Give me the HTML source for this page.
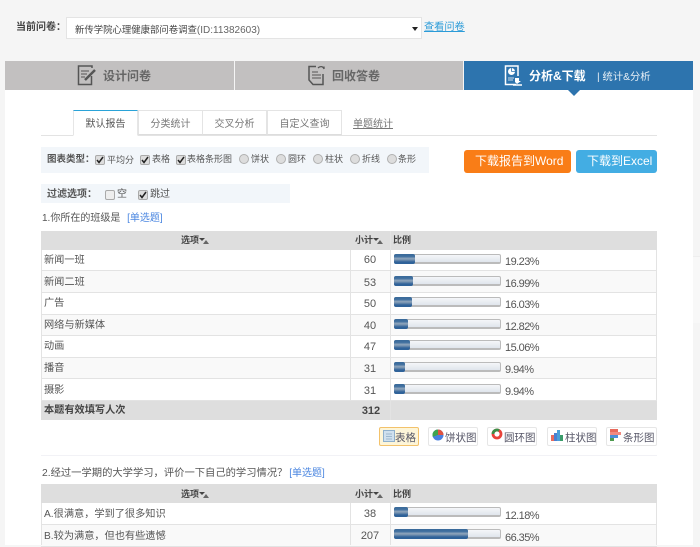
<!DOCTYPE html>
<html><head><meta charset="utf-8"><style>
html,body{margin:0;padding:0}
body{width:700px;height:545px;overflow:hidden;position:relative;background:#f5f5f5;font-family:"Liberation Sans","Noto Sans CJK SC",sans-serif;font-size:10px;color:#555}
.box{position:absolute}
.t{position:absolute;white-space:nowrap;line-height:14px}
.cb{position:absolute;width:10px;height:10px;box-sizing:border-box;border:1px solid #aaa;border-radius:2px;background:#ddd}
.cb svg{position:absolute;left:0;top:0}
.cb.e{background:#eee}
.rd{position:absolute;width:10px;height:10px;box-sizing:border-box;border:1px solid #b0b0b0;border-radius:50%;background:#ddd}
.tb{position:absolute;top:110px;height:25px;border:1px solid #e4e4e4;border-bottom:1px solid #ddd;box-sizing:border-box;background:#fff;text-align:center;line-height:28px;font-size:10px;color:#666}
.bar{position:absolute;left:394px;width:107px;height:10px;box-sizing:border-box;border:1px solid #bbb;border-bottom:2px solid #bbb;border-radius:2px;background:linear-gradient(#f4f6f9,#dfe5ec)}
.bar i{position:absolute;left:-1px;top:-1px;height:10px;border-radius:2px;background:linear-gradient(#3a6a9a 0,#3f6f9f 25%,#8fa5bc 45%,#7d97b2 55%,#2f6299 80%,#2f6299 100%)}
.row{position:absolute;left:41px;width:616px;box-sizing:border-box;border-bottom:1px solid #e3e3e3}
.lbl{position:absolute;left:44px;font-size:10.2px;color:#555;line-height:14px;white-space:nowrap}
.n{position:absolute;left:350px;width:40px;text-align:center;font-size:11px;color:#555;line-height:14px}
.p{position:absolute;left:505px;font-size:11px;letter-spacing:-.55px;color:#555;line-height:14px}
.v{position:absolute;width:1px;background:#e3e3e3}
.th{font-weight:bold;color:#444;font-size:9px}
.ib{position:absolute;top:427px;height:19px;box-sizing:border-box;border:1px solid #e6e6e6;border-radius:2px;background:#fff;font-size:10.5px;color:#556;line-height:19px;white-space:nowrap}
.ib svg{position:absolute}
.ib span{position:absolute;top:1px}
.sort{display:inline-block;vertical-align:-1px}
</style></head><body>

<div class="t" style="left:16px;top:21px;font-size:10px;font-weight:bold;color:#444">当前问卷：</div>
<div class="box" style="left:66px;top:17px;width:356px;height:22px;box-sizing:border-box;border:1px solid #e4e4e4;background:#fff"></div>
<div class="t" style="left:75px;top:23px;font-size:9.400px;color:#444">新传学院心理健康部问卷调查<span style="color:#666;font-size:10px">(ID:11382603)</span></div>
<div class="box" style="left:412px;top:27px;width:0;height:0;border-left:3.500px solid transparent;border-right:3.500px solid transparent;border-top:4px solid #222"></div>
<div class="t" style="left:424px;top:21px;font-size:10.200px;color:#2b9bd8;text-decoration:underline">查看问卷</div>

<div class="box" style="left:693px;top:256px;width:7px;height:66px;background:#f8f8f8;border-top:1px solid #eee"></div>
<div class="box" style="left:5px;top:90px;width:688px;height:455px;background:#fff"></div>
<div class="box" style="left:5px;top:61px;width:229px;height:29px;background:#c2c0c0"></div>
<div class="box" style="left:235px;top:61px;width:228px;height:29px;background:#c2c0c0"></div>
<div class="box" style="left:464px;top:61px;width:229px;height:29px;background:#2d74ae"></div>
<div class="box" style="left:568px;top:90px;width:0;height:0;border-left:6px solid transparent;border-right:6px solid transparent;border-top:6px solid #2d74ae"></div>

<svg class="box" style="left:77px;top:65px" width="20" height="21" viewBox="0 0 20 21" fill="none" stroke="#555" stroke-width="1.500"><path d="M15 3V1H1.500V19.500H14.500V11"/><path d="M4 6H12M4 9H10M4 12H8" stroke-width="1"/><path d="M8 15L18 5" stroke-width="2.500"/></svg>
<div class="t" style="left:103px;top:69px;font-size:12px;font-weight:bold;color:#666">设计问卷</div>

<svg class="box" style="left:308px;top:65px" width="18" height="21" viewBox="0 0 18 21" fill="none" stroke="#555" stroke-width="1.500"><path d="M8 1.500H1V15L5 19.500H15V9"/><path d="M4 7H10M4 10H13M4 13H13" stroke-width="1"/><path d="M10 3C12 1 15 1 16 4M16 4V1.500" stroke-width="1.300"/></svg>
<div class="t" style="left:332px;top:69px;font-size:12px;font-weight:bold;color:#666">回收答卷</div>

<svg class="box" style="left:504px;top:65px" width="18" height="21" viewBox="0 0 18 21" fill="none" stroke="#fff"><path d="M12 19.500H1.500V1H14V11" stroke-width="1.500"/><circle cx="7.500" cy="6.500" r="3.500" fill="#fff" stroke="none"/><path d="M7.500 6.500V3M7.500 6.500H11" stroke="#2d74ae" stroke-width=".8"/><path d="M4 13H10M4 15H9" stroke-width=".8"/><path d="M11 13H15V16H17L13 19L11 17Z" fill="#fff" stroke="none"/><path d="M9 20H18" stroke-width="1.500"/></svg>
<div class="t" style="left:529px;top:69px;font-size:12px;font-weight:bold;color:#fff">分析&amp;下载</div>
<div class="t" style="left:597px;top:71px;font-size:10.300px;color:#e8f0f6">| 统计&amp;分析</div>

<div class="box" style="left:41px;top:135px;width:616px;height:1px;background:#e3e3e3"></div>
<div class="tb" style="left:73px;width:65px;height:26px;border-color:#e6e6e6;border-top:1px solid #2aa3d8;border-bottom:1px solid #fff;color:#555">默认报告</div>
<div class="tb" style="left:138px;width:65px;color:#777">分类统计</div>
<div class="tb" style="left:202px;width:65px;color:#777">交叉分析</div>
<div class="tb" style="left:267px;width:75px;color:#777">自定义查询</div>
<div class="t" style="left:353px;top:118px;font-size:10px;color:#777;text-decoration:underline">单题统计</div>

<div class="box" style="left:41px;top:147px;width:388px;height:26px;background:#f2f6fa"></div>
<div class="t" style="left:47px;top:153px;font-size:9.500px;font-weight:bold;color:#555">图表类型：</div>
<div class="cb" style="left:95px;top:155px"><svg width="8" height="8" viewBox="0 0 8 8"><path d="M1 4L3 6.500L7 1" fill="none" stroke="#222" stroke-width="1.500"/></svg></div>
<div class="t" style="left:107px;top:153px;font-size:9px">平均分</div>
<div class="cb" style="left:140px;top:155px"><svg width="8" height="8" viewBox="0 0 8 8"><path d="M1 4L3 6.500L7 1" fill="none" stroke="#222" stroke-width="1.500"/></svg></div>
<div class="t" style="left:152px;top:152px;font-size:9px">表格</div>
<div class="cb" style="left:176px;top:155px"><svg width="8" height="8" viewBox="0 0 8 8"><path d="M1 4L3 6.500L7 1" fill="none" stroke="#222" stroke-width="1.500"/></svg></div>
<div class="t" style="left:187px;top:152px;font-size:9px">表格条形图</div>
<div class="rd" style="left:239px;top:154px"></div><div class="t" style="left:251px;top:152px;font-size:9px">饼状</div>
<div class="rd" style="left:276px;top:154px"></div><div class="t" style="left:288px;top:152px;font-size:9px">圆环</div>
<div class="rd" style="left:313px;top:154px"></div><div class="t" style="left:325px;top:152px;font-size:9px">柱状</div>
<div class="rd" style="left:350px;top:154px"></div><div class="t" style="left:362px;top:152px;font-size:9px">折线</div>
<div class="rd" style="left:387px;top:154px"></div><div class="t" style="left:398px;top:152px;font-size:9px">条形</div>

<div class="box" style="left:464px;top:150px;width:107px;height:23px;background:#f97d17;border-radius:3px"></div>
<div class="t" style="left:475px;top:154px;font-size:12px;color:#fff">下载报告到Word</div>
<div class="box" style="left:576px;top:150px;width:81px;height:23px;background:#43ade3;border-radius:3px"></div>
<div class="t" style="left:587px;top:154px;font-size:12px;color:#fff">下载到Excel</div>

<div class="box" style="left:41px;top:184px;width:249px;height:19px;background:#f2f6fa"></div>
<div class="t" style="left:47px;top:188px;font-size:10px;font-weight:bold;color:#555">过滤选项：</div>
<div class="cb e" style="left:105px;top:190px"></div>
<div class="t" style="left:117px;top:188px;font-size:10px">空</div>
<div class="cb" style="left:138px;top:190px"><svg width="8" height="8" viewBox="0 0 8 8"><path d="M1 4L3 6.500L7 1" fill="none" stroke="#222" stroke-width="1.500"/></svg></div>
<div class="t" style="left:150px;top:188px;font-size:10px">跳过</div>

<div class="t" style="left:42px;top:212px;font-size:10px;color:#555">1.你所在的班级是 <span style="color:#4a86e0;margin-left:4px">[单选题]</span></div>

<!-- Table 1 -->
<div class="box" style="left:41px;top:231px;width:616px;height:19px;background:#dedede"></div>
<div class="t th" style="left:181px;top:233px">选项<svg class="sort" width="10" height="6" viewBox="0 0 10 6"><path d="M0 0H6L3 3Z" fill="#444"/><path d="M4 6L7 2L10 6Z" fill="#666"/></svg></div>
<div class="t th" style="left:355px;top:233px">小计<svg class="sort" width="10" height="6" viewBox="0 0 10 6"><path d="M0 0H6L3 3Z" fill="#444"/><path d="M4 6L7 2L10 6Z" fill="#666"/></svg></div>
<div class="t th" style="left:393px;top:233px">比例</div>

<div class="row" style="top:250px;height:21px;background:#fff"></div>
<div class="row" style="top:271px;height:22px;background:#f9f9f9"></div>
<div class="row" style="top:293px;height:22px;background:#fff"></div>
<div class="row" style="top:315px;height:21px;background:#f9f9f9"></div>
<div class="row" style="top:336px;height:22px;background:#fff"></div>
<div class="row" style="top:358px;height:21px;background:#f9f9f9"></div>
<div class="row" style="top:379px;height:22px;background:#fff"></div>
<div class="box" style="left:41px;top:401px;width:616px;height:19px;background:#dedede"></div>
<div class="v" style="left:41px;top:250px;height:151px"></div>
<div class="v" style="left:656px;top:250px;height:151px"></div>
<div class="v" style="left:350px;top:250px;height:151px"></div>
<div class="v" style="left:390px;top:231px;height:189px"></div>

<div class="lbl" style="top:254px">新闻一班</div><div class="n" style="top:253px">60</div><div class="bar" style="top:254px"><i style="width:21px"></i></div><div class="p" style="top:255px">19.23%</div>
<div class="lbl" style="top:276px">新闻二班</div><div class="n" style="top:276px">53</div><div class="bar" style="top:276px"><i style="width:19px"></i></div><div class="p" style="top:277px">16.99%</div>
<div class="lbl" style="top:297px">广告</div><div class="n" style="top:297px">50</div><div class="bar" style="top:297px"><i style="width:18px"></i></div><div class="p" style="top:298px">16.03%</div>
<div class="lbl" style="top:319px">网络与新媒体</div><div class="n" style="top:319px">40</div><div class="bar" style="top:319px"><i style="width:14px"></i></div><div class="p" style="top:320px">12.82%</div>
<div class="lbl" style="top:340px">动画</div><div class="n" style="top:340px">47</div><div class="bar" style="top:340px"><i style="width:16px"></i></div><div class="p" style="top:341px">15.06%</div>
<div class="lbl" style="top:362px">播音</div><div class="n" style="top:362px">31</div><div class="bar" style="top:362px"><i style="width:11px"></i></div><div class="p" style="top:363px">9.94%</div>
<div class="lbl" style="top:384px">摄影</div><div class="n" style="top:384px">31</div><div class="bar" style="top:384px"><i style="width:11px"></i></div><div class="p" style="top:385px">9.94%</div>
<div class="t" style="left:44px;top:404px;font-size:10.200px;font-weight:bold;color:#444">本题有效填写人次</div>
<div class="n" style="top:404px;font-weight:bold;color:#444;font-size:11px;left:351px">312</div>

<!-- Chart buttons -->
<div class="ib" style="left:379px;width:40px;border-color:#f3c26b;background:#fdf5d8"><svg style="left:3px;top:2px" width="12" height="12"><rect x=".5" y=".5" width="11" height="11" fill="#cfe0ee" stroke="#8fb0cc"/><path d="M3 4H9M3 6.500H9M3 9H9" stroke="#9db9cf"/></svg><span style="left:15px">表格</span></div>
<div class="ib" style="left:428px;width:50px"><svg style="left:3px;top:1px" width="12" height="12"><circle cx="6" cy="6" r="5.500" fill="#4a80e0"/><path d="M6 6L6 .5A5.500 5.500 0 0 0 .8 7.800Z" fill="#3fa34d"/><path d="M6 6L6 .5A5.500 5.500 0 0 1 11.500 6Z" fill="#e0533f"/></svg><span style="left:16px">饼状图</span></div>
<div class="ib" style="left:487px;width:50px"><svg style="left:3px;top:0" width="12" height="12"><circle cx="6" cy="6" r="4" fill="none" stroke="#e8433a" stroke-width="2.800"/><path d="M2 6A4 4 0 0 1 8 2.500" fill="none" stroke="#3c8f48" stroke-width="2.800"/></svg><span style="left:16px">圆环图</span></div>
<div class="ib" style="left:547px;width:50px"><svg style="left:3px;top:2px" width="12" height="11"><rect x="0" y="5" width="3" height="6" fill="#e86a5c"/><rect x="3" y="3" width="3" height="8" fill="#4a7fd0"/><rect x="6" y="0" width="3" height="11" fill="#4a9fd8"/><rect x="9" y="5" width="3" height="6" fill="#3a9c6a"/></svg><span style="left:17px">柱状图</span></div>
<div class="ib" style="left:606px;width:51px"><svg style="left:3px;top:1px" width="12" height="12"><rect x="0" y="0" width="8" height="3" fill="#e86a5c"/><rect x="0" y="3" width="11" height="3" fill="#f08a80"/><rect x="0" y="6" width="8" height="3" fill="#4a8fd8"/><rect x="0" y="9" width="4" height="3" fill="#4e9a4e"/></svg><span style="left:16px">条形图</span></div>

<div class="box" style="left:41px;top:455px;width:616px;height:1px;background:#f2f2f6"></div>

<div class="t" style="left:42px;top:467px;font-size:10.300px;color:#555">2.经过一学期的大学学习，评价一下自己的学习情况？ <span style="color:#4a86e0;margin-left:-1px;font-size:10px">[单选题]</span></div>

<!-- Table 2 -->
<div class="box" style="left:41px;top:484px;width:616px;height:19px;background:#dedede"></div>
<div class="t th" style="left:181px;top:487px">选项<svg class="sort" width="10" height="6" viewBox="0 0 10 6"><path d="M0 0H6L3 3Z" fill="#444"/><path d="M4 6L7 2L10 6Z" fill="#666"/></svg></div>
<div class="t th" style="left:355px;top:487px">小计<svg class="sort" width="10" height="6" viewBox="0 0 10 6"><path d="M0 0H6L3 3Z" fill="#444"/><path d="M4 6L7 2L10 6Z" fill="#666"/></svg></div>
<div class="t th" style="left:393px;top:487px">比例</div>
<div class="row" style="top:503px;height:22px;background:#fff"></div>
<div class="row" style="top:525px;height:22px;background:#f9f9f9"></div>
<div class="v" style="left:41px;top:503px;height:42px"></div>
<div class="v" style="left:656px;top:503px;height:42px"></div>
<div class="v" style="left:350px;top:503px;height:42px"></div>
<div class="v" style="left:390px;top:484px;height:61px"></div>
<div class="lbl" style="top:508px">A.很满意，学到了很多知识</div><div class="n" style="top:507px">38</div><div class="bar" style="top:507px"><i style="width:14px"></i></div><div class="p" style="top:509px">12.18%</div>
<div class="lbl" style="top:530px">B.较为满意，但也有些遗憾</div><div class="n" style="top:529px">207</div><div class="bar" style="top:529px"><i style="width:74px"></i></div><div class="p" style="top:531px">66.35%</div>

</body></html>
